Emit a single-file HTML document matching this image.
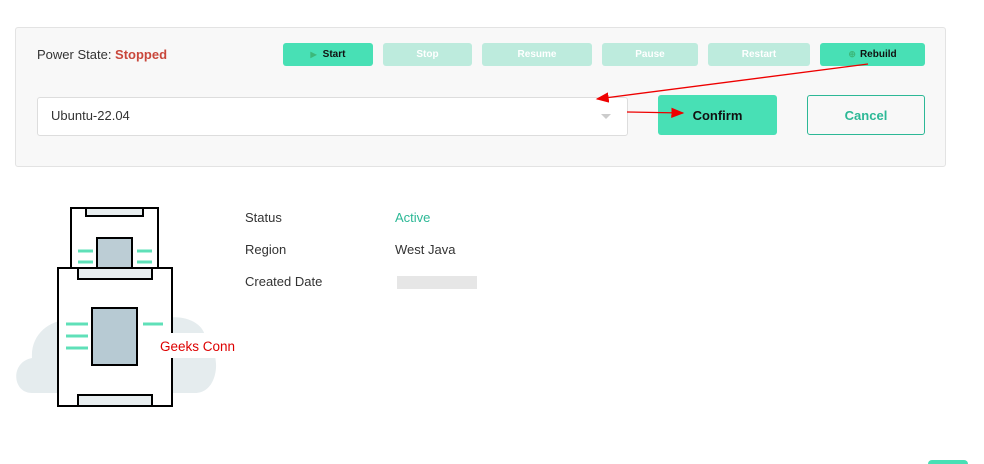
<!DOCTYPE html>
<html style="width:984px;height:464px;overflow:hidden"><head><style>
body{margin:0;width:984px;height:464px;background:#fff;font-family:"Liberation Sans",sans-serif;position:relative;overflow:hidden}
.a{position:absolute}
.panel{left:15px;top:27px;width:929px;height:138px;background:#f8f8f8;border:1px solid #e3e3e3;border-radius:3px}
.btn{position:absolute;top:43px;height:23px;border-radius:3px;font-size:10px;font-weight:bold;display:flex;align-items:center;justify-content:center;color:#fff}
.on{background:#48e0b5;color:#111}
.off{background:#bdebdd}
.lbl{font-size:13px;color:#333}
</style></head><body>
<div class="a panel"></div>
<div class="a" style="left:37px;top:47px;font-size:13px;color:#333">Power State: <span style="color:#c9473b;font-weight:bold">Stopped</span></div>
<div class="btn on" style="left:283px;width:90px"><span style="color:#3cb87a;font-size:8px;margin-right:6px">▶</span>Start</div>
<div class="btn off" style="left:383px;width:89px">Stop</div>
<div class="btn off" style="left:482px;width:110px">Resume</div>
<div class="btn off" style="left:602px;width:96px">Pause</div>
<div class="btn off" style="left:708px;width:102px">Restart</div>
<div class="btn on" style="left:820px;width:105px"><span style="color:#3cb87a;font-size:9px;margin-right:4px">⊕</span>Rebuild</div>
<div class="a" style="left:37px;top:97px;width:589px;height:37px;background:#fff;border:1px solid #ddd;border-radius:3px"></div>
<div class="a" style="left:51px;top:108px;font-size:13px;color:#333">Ubuntu-22.04</div>
<div class="a" style="left:601px;top:114px;width:0;height:0;border-left:5px solid transparent;border-right:5px solid transparent;border-top:5px solid #ccc"></div>
<div class="a" style="left:658px;top:95px;width:119px;height:40px;background:#48e0b5;border-radius:3px;display:flex;align-items:center;justify-content:center;font-size:13px;font-weight:bold;color:#111">Confirm</div>
<div class="a" style="left:807px;top:95px;width:116px;height:38px;border:1px solid #2cb896;border-radius:3px;display:flex;align-items:center;justify-content:center;font-size:13px;font-weight:bold;color:#2cb896">Cancel</div>
<svg class="a" style="left:0;top:0" width="984" height="200">
<defs><marker id="m" markerWidth="10" markerHeight="8" refX="9" refY="4" orient="auto"><path d="M0,0L10,4L0,8z" fill="#e00"/></marker></defs>
<line x1="868" y1="64" x2="597" y2="99" stroke="#e00" stroke-width="1.3" marker-end="url(#m)"/>
<line x1="627" y1="112" x2="683" y2="113" stroke="#e00" stroke-width="1.3" marker-end="url(#m)"/>
</svg>
<div class="a lbl" style="left:245px;top:210px">Status</div>
<div class="a lbl" style="left:245px;top:242px">Region</div>
<div class="a lbl" style="left:245px;top:274px">Created Date</div>
<div class="a" style="left:395px;top:210px;font-size:13px;color:#2cb896">Active</div>
<div class="a lbl" style="left:395px;top:242px">West Java</div>
<div class="a" style="left:397px;top:276px;width:80px;height:13px;background:#e6e6e6"></div>
<div class="a" style="left:928px;top:460px;width:40px;height:4px;border-radius:20px 20px 0 0;background:#48e0b5"></div>
<svg class="a" style="left:0;top:190px" width="260" height="230">
<path d="M32,203 C12,203 10,172 32,168 C30,138 62,122 84,134 C100,112 145,112 160,130 C180,122 208,132 205,152 C222,160 220,203 195,203 Z" fill="#e5ecee"/>
<g stroke="#000" stroke-width="2" fill="#fff">
<rect x="71" y="18" width="87" height="60"/>
<rect x="86" y="18" width="57" height="8" fill="#e8eef0"/>
<rect x="97" y="48" width="35" height="30" fill="#bccdd5"/>
<rect x="58" y="78" width="114" height="138"/>
<rect x="78" y="78" width="74" height="11" fill="#e8eef0"/>
<rect x="92" y="118" width="45" height="57" fill="#b7cad3"/>
<rect x="78" y="205" width="74" height="11" fill="#e8eef0"/>
</g>
<g stroke="#5fe0b8" stroke-width="3">
<path d="M78,61h15M78,72h15M137,61h15M137,72h15M66,134h22M66,146h22M66,158h22M143,134h20"/>
</g>
<rect x="155" y="143" width="87" height="25" fill="#fff"/>
<text x="160" y="161" font-size="13.5" fill="#d00" font-family="Liberation Sans">Geeks Conn</text>
</svg>
</body></html>
